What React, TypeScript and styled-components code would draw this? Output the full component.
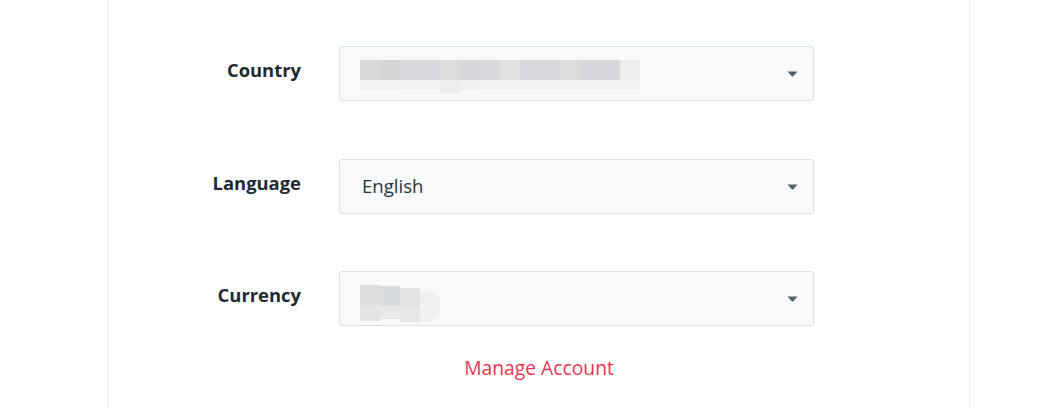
import React from 'react';
import styled, { createGlobalStyle } from 'styled-components';

type Blot = { w: number; top: string; bottom: string; dy?: number; h?: number };

// Blurred-out values as they appear in the screenshot
const countryBlur: Blot[] = [
  { w: 20, top: '#d9dadc', bottom: '#f1f2f3' },
  { w: 20, top: '#d5d6d8', bottom: '#f1f2f3' },
  { w: 20, top: '#d9dbde', bottom: '#f2f3f4' },
  { w: 20, top: '#dadbde', bottom: '#f3f4f5' },
  { w: 20, top: '#dcdcde', bottom: '#eceeed', h: 33 },
  { w: 20, top: '#d6d8dc', bottom: '#eff1f1' },
  { w: 20, top: '#d9dadd', bottom: '#f2f3f4' },
  { w: 20, top: '#dfe1e3', bottom: '#f2f3f4' },
  { w: 20, top: '#d7d9dc', bottom: '#f3f4f5' },
  { w: 20, top: '#d7d9dc', bottom: '#f3f4f5' },
  { w: 20, top: '#dbdcde', bottom: '#f3f4f5' },
  { w: 20, top: '#d7d8dc', bottom: '#f3f4f5' },
  { w: 20, top: '#d7d8dc', bottom: '#f3f4f5' },
  { w: 20, top: '#ebedee', bottom: '#f3f4f5' },
];

const currencyBlur: Blot[] = [
  { w: 20, top: '#dcdddf', bottom: '#e4e5e6', dy: 0, h: 36 },
  { w: 20, top: '#d8dcdf', bottom: '#e8e9ea', dy: 1, h: 33 },
  { w: 20, top: '#e2e3e5', bottom: '#e6e7e8', dy: 3, h: 34 },
  { w: 20, top: '#eef0f1', bottom: '#f0f1f2', dy: 6, h: 31 },
];

const fields = [
  { label: 'Country', value: null as string | null, blur: countryBlur, round: false },
  { label: 'Language', value: 'English', blur: null, round: false },
  { label: 'Currency', value: null, blur: currencyBlur, round: true },
];

const App: React.FC = () => {
  return (
    <>
      <GlobalStyle />
      <Page>
        <Card>
          <Form>
            {fields.map(field => (
              <Row key={field.label}>
                <Label>{field.label}</Label>
                <Select>
                  {field.value && <Value>{field.value}</Value>}
                  {field.blur && (
                    <BlurStrip>
                      {field.blur.map((b, i) => (
                        <BlurCell
                          key={i}
                          $w={b.w}
                          $top={b.top}
                          $bottom={b.bottom}
                          $dy={b.dy ?? 0}
                          $h={b.h ?? 30}
                          $round={field.round && i === field.blur!.length - 1}
                        />
                      ))}
                    </BlurStrip>
                  )}
                  <Caret viewBox="0 0 11 6">
                    <path d="M0.5 0.5 H10.5 L6.2 5.2 Q5.5 5.9 4.8 5.2 Z" fill="#4a5e6b" />
                  </Caret>
                </Select>
              </Row>
            ))}
          </Form>
          <ManageLink href="#">Manage Account</ManageLink>
        </Card>
      </Page>
    </>
  );
};

const GlobalStyle = createGlobalStyle`
  html, body {
    margin: 0;
    padding: 0;
    background: #ffffff;
    font-family: "Open Sans", "Liberation Sans", sans-serif;
  }
`;

const Page = styled.div`
  width: 1061px;
  height: 408px;
  overflow: hidden;
  background: #ffffff;
`;

const Card = styled.div`
  margin-left: 108px;
  width: 860px;
  height: 408px;
  border-left: 1px solid #efefef;
  border-right: 1px solid #efefef;
  display: flex;
  flex-direction: column;
  align-items: center;
`;

const Form = styled.div`
  padding-top: 46px;
  padding-left: 50px;
  display: flex;
  flex-direction: column;
  gap: 57.5px;
  align-self: flex-start;
`;

const Row = styled.div`
  display: grid;
  grid-template-columns: 142px 475px;
  column-gap: 38px;
  align-items: center;
`;

const Label = styled.div`
  text-align: right;
  font-size: 18.4px;
  font-weight: 700;
  color: #1f2b33;
  padding-bottom: 8px;
  white-space: nowrap;
`;

const Select = styled.div`
  position: relative;
  height: 55px;
  box-sizing: border-box;
  border: 1px solid #d6e2ea;
  border-radius: 3px;
  background: #f7f9fb;
  display: flex;
  align-items: center;
  padding-left: 22px;
`;

const Value = styled.span`
  font-size: 18.6px;
  color: #2b3238;
  padding-bottom: 1px;
`;

const BlurStrip = styled.div`
  display: flex;
  align-self: flex-start;
  margin-top: 13px;
  margin-left: -2px;
`;

const BlurCell = styled.div<{ $w: number; $top: string; $bottom: string; $dy: number; $h: number; $round: boolean }>`
  width: ${p => p.$w}px;
  height: ${p => p.$h}px;
  margin-top: ${p => p.$dy}px;
  background: linear-gradient(to bottom, ${p => p.$top} 0, ${p => p.$top} 20px, ${p => p.$bottom} 20px);
  border-radius: ${p => (p.$round ? '0 12px 12px 0' : '0')};
`;

const Caret = styled.svg`
  position: absolute;
  right: 15px;
  top: 24px;
  width: 11px;
  height: 6px;
`;

const ManageLink = styled.a`
  margin-top: 30px;
  font-size: 19.3px;
  color: #e8364f;
  text-decoration: none;
  line-height: 24px;
`;

export default App;
